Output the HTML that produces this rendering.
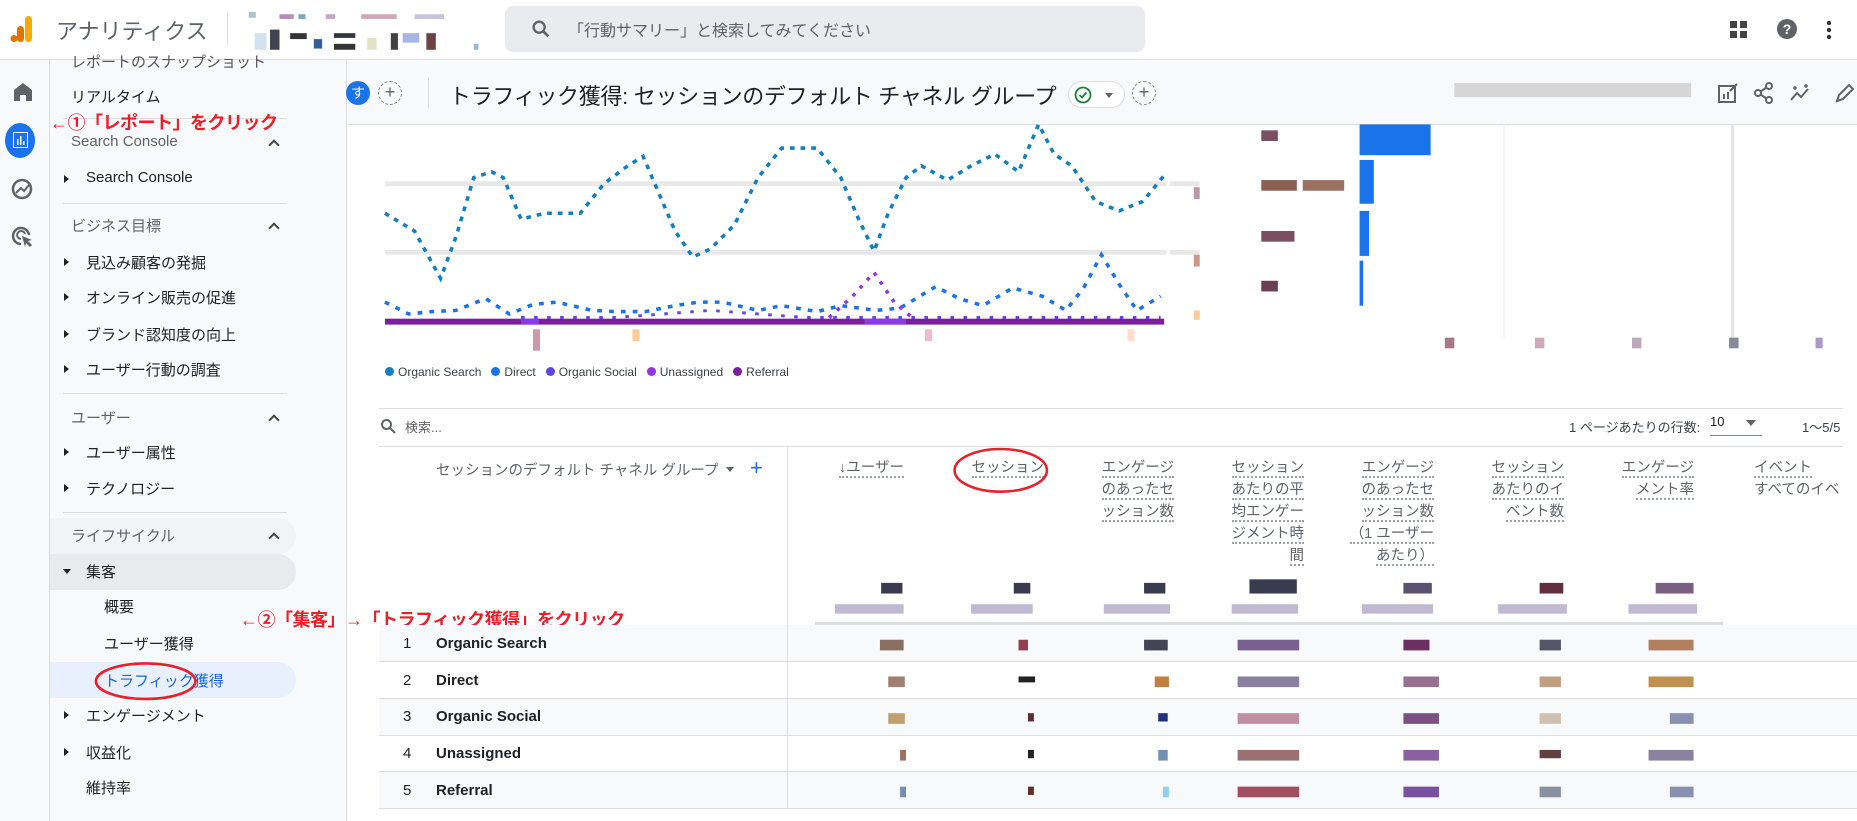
<!DOCTYPE html>
<html><head><meta charset="utf-8">
<style>
*{margin:0;padding:0;box-sizing:border-box}
body{width:1857px;height:821px;overflow:hidden;position:relative;background:#fff;font-family:"Liberation Sans","Noto Sans CJK JP",sans-serif;color:#202124}
.a{position:absolute;white-space:nowrap}
.nav{font-size:15px;color:#202124}
.hd{font-size:15px;color:#5f6368}
.tri{position:absolute;width:0;height:0;border-top:4px solid transparent;border-bottom:4px solid transparent;border-left:5px solid #202124}
.chev{position:absolute;width:8px;height:8px;border-left:2px solid #444;border-top:2px solid #444;transform:rotate(45deg)}
.red{color:#e8202a;font-weight:bold;font-size:18px;letter-spacing:-0.5px}
.col{font-size:14.5px;color:#5f6368;line-height:22px;text-align:right}
.col span{border-bottom:2px dotted #9aa0a6}
.row{position:absolute;left:379px;width:1478px;height:37px}
.rn{font-size:15px;color:#202124}
.rname{font-size:15px;font-weight:bold;color:#202124}
</style></head><body>

<div class="a" style="left:0;top:0;width:1857px;height:60px;background:#fff;border-bottom:1px solid #dadce0"></div>
<svg class="a" style="left:10px;top:14px" width="24" height="30" viewBox="0 0 24 30"><rect x="15" y="2" width="7" height="26" rx="3.5" fill="#f9ab00"/><rect x="7" y="12" width="7" height="16" rx="3.5" fill="#e37400"/><circle cx="4" cy="24.5" r="3.5" fill="#e37400"/></svg>
<div class="a" style="left:56px;top:14px;font-size:22px;color:#5f6368">アナリティクス</div>
<div class="a" style="left:227px;top:13px;width:1px;height:32px;background:#dadce0"></div>
<div class="a" style="left:505px;top:6px;width:640px;height:46px;background:#e9ebee;border-radius:8px"></div>
<svg class="a" style="left:530px;top:18px" width="22" height="22" viewBox="0 0 24 24"><circle cx="10" cy="10" r="6" fill="none" stroke="#5f6368" stroke-width="2.5"/><path d="M14.5 14.5L20 20" stroke="#5f6368" stroke-width="3"/></svg>
<div class="a" style="left:568px;top:17px;font-size:16px;color:#5f6368">「行動サマリー」と検索してみてください</div>
<svg class="a" style="left:1729px;top:20px" width="20" height="20"><rect x="1" y="1" width="7" height="7" fill="#444"/><rect x="11" y="1" width="7" height="7" fill="#444"/><rect x="1" y="11" width="7" height="7" fill="#444"/><rect x="11" y="11" width="7" height="7" fill="#444"/></svg>
<svg class="a" style="left:1776px;top:18px" width="22" height="22"><circle cx="11" cy="11" r="10" fill="#5f6368"/><text x="11" y="16" font-size="14" font-weight="bold" fill="#fff" text-anchor="middle" font-family="Liberation Sans">?</text></svg>
<svg class="a" style="left:1826px;top:20px" width="6" height="20"><circle cx="3" cy="3" r="2.2" fill="#333"/><circle cx="3" cy="10" r="2.2" fill="#333"/><circle cx="3" cy="17" r="2.2" fill="#333"/></svg>

<div class="a" style="left:0;top:60px;width:50px;height:761px;background:#f8f9fa;border-right:1px solid #dadce0"></div>
<svg class="a" style="left:12px;top:82px" width="22" height="20" viewBox="0 0 22 20"><path d="M11 1L2 8v11h6v-6h6v6h6V8z" fill="#5f6368"/></svg>
<div class="a" style="left:5px;top:123px;width:30px;height:35px;border-radius:50%;background:#1a73e8"></div>
<svg class="a" style="left:13px;top:132px" width="15" height="16"><rect x="0.5" y="0.5" width="14" height="15" fill="none" stroke="#fff"/><rect x="4" y="7" width="1.5" height="6" fill="#fff"/><rect x="7" y="4" width="1.5" height="9" fill="#fff"/><rect x="10" y="9" width="1.5" height="4" fill="#fff"/></svg>
<svg class="a" style="left:11px;top:178px" width="22" height="22"><circle cx="11" cy="11" r="9" fill="none" stroke="#5f6368" stroke-width="2.5"/><path d="M5 15l5-5 3 3 5-6" fill="none" stroke="#5f6368" stroke-width="2"/></svg>
<svg class="a" style="left:11px;top:225px" width="24" height="24"><path d="M18 10a8 8 0 1 0-8 9" fill="none" stroke="#5f6368" stroke-width="2.5"/><path d="M14 9a4 4 0 1 0-4 5" fill="none" stroke="#5f6368" stroke-width="2"/><path d="M11 11l10 4-4 1 4 4-2 2-4-4-1 4z" fill="#5f6368"/></svg>

<div class="a" style="left:50px;top:60px;width:297px;height:761px;background:#f8f9fa;border-right:1px solid #dadce0"></div>
<div class="a nav" style="left:71px;top:51px;color:#555">レポートのスナップショット</div>
<div class="a" style="left:0;top:0;width:347px;height:61px;background:#fff;border-bottom:1px solid #dadce0;z-index:0;display:none"></div>
<div class="a nav" style="left:71px;top:86px">リアルタイム</div>
<div class="a" style="left:63px;top:118px;width:224px;height:1px;background:#dadce0"></div>
<div class="a hd" style="left:71px;top:133px">Search Console</div><div class="chev" style="left:270px;top:141px"></div>
<div class="tri" style="left:64px;top:175px"></div><div class="a nav" style="left:86px;top:169px">Search Console</div>
<div class="a" style="left:63px;top:203px;width:224px;height:1px;background:#dadce0"></div>
<div class="a hd" style="left:71px;top:215px">ビジネス目標</div><div class="chev" style="left:270px;top:224px"></div>
<div class="tri" style="left:64px;top:258px"></div><div class="a nav" style="left:86px;top:252px">見込み顧客の発掘</div>
<div class="tri" style="left:64px;top:293px"></div><div class="a nav" style="left:86px;top:287px">オンライン販売の促進</div>
<div class="tri" style="left:64px;top:330px"></div><div class="a nav" style="left:86px;top:324px">ブランド認知度の向上</div>
<div class="tri" style="left:64px;top:365px"></div><div class="a nav" style="left:86px;top:359px">ユーザー行動の調査</div>
<div class="a" style="left:63px;top:393px;width:224px;height:1px;background:#dadce0"></div>
<div class="a hd" style="left:71px;top:407px">ユーザー</div><div class="chev" style="left:270px;top:416px"></div>
<div class="tri" style="left:64px;top:448px"></div><div class="a nav" style="left:86px;top:442px">ユーザー属性</div>
<div class="tri" style="left:64px;top:484px"></div><div class="a nav" style="left:86px;top:478px">テクノロジー</div>
<div class="a" style="left:63px;top:512px;width:224px;height:1px;background:#dadce0"></div>
<div class="a" style="left:50px;top:518px;width:246px;height:36px;background:#f1f3f4;border-radius:0 18px 18px 0"></div>
<div class="a hd" style="left:71px;top:525px">ライフサイクル</div><div class="chev" style="left:270px;top:534px"></div>
<div class="a" style="left:50px;top:554px;width:246px;height:36px;background:#e8eaed;border-radius:0 18px 18px 0"></div>
<div class="a" style="left:63px;top:569px;width:0;height:0;border-left:4px solid transparent;border-right:4px solid transparent;border-top:5px solid #202124"></div>
<div class="a nav" style="left:86px;top:561px">集客</div>
<div class="a nav" style="left:104px;top:596px">概要</div>
<div class="a nav" style="left:104px;top:633px">ユーザー獲得</div>
<div class="a" style="left:50px;top:662px;width:246px;height:36px;background:#e8f0fe;border-radius:0 18px 18px 0"></div>
<div class="a nav" style="left:104px;top:670px;color:#1967d2">トラフィック獲得</div>
<div class="tri" style="left:64px;top:711px"></div><div class="a nav" style="left:86px;top:705px">エンゲージメント</div>
<div class="tri" style="left:64px;top:748px"></div><div class="a nav" style="left:86px;top:742px">収益化</div>
<div class="a nav" style="left:86px;top:777px">維持率</div>

<div class="a" style="left:348px;top:61px;width:1509px;height:64px;background:#f8f9fa;border-bottom:1px solid #dadce0"></div>
<div class="a" style="left:346px;top:81px;width:24px;height:24px;border-radius:50%;background:#1a73e8;color:#fff;font-size:14px;text-align:center;line-height:24px">す</div>
<div class="a" style="left:378px;top:81px;width:24px;height:24px;border-radius:50%;border:1px dashed #80868b;color:#5f6368;font-size:18px;text-align:center;line-height:21px">+</div>
<div class="a" style="left:428px;top:78px;width:1px;height:30px;background:#dadce0"></div>
<div class="a" style="left:449px;top:79px;font-size:22px;color:#202124;letter-spacing:-0.3px">トラフィック獲得: セッションのデフォルト チャネル グループ</div>
<div class="a" style="left:1068px;top:81px;width:57px;height:27px;border:1px solid #dadce0;border-radius:14px;background:#fff"></div>
<svg class="a" style="left:1074px;top:86px" width="18" height="18"><circle cx="9" cy="9" r="7.5" fill="none" stroke="#188038" stroke-width="1.8"/><path d="M5.5 9l2.5 2.5 4.5-5" fill="none" stroke="#188038" stroke-width="1.8"/></svg>
<div class="a" style="left:1105px;top:93px;width:0;height:0;border-left:4px solid transparent;border-right:4px solid transparent;border-top:5px solid #5f6368"></div>
<div class="a" style="left:1132px;top:81px;width:24px;height:24px;border-radius:50%;border:1px dashed #80868b;color:#5f6368;font-size:18px;text-align:center;line-height:21px">+</div>
<svg class="a" style="left:1717px;top:82px" width="22" height="22"><rect x="2" y="4" width="16" height="16" fill="none" stroke="#5f6368" stroke-width="2"/><rect x="6" y="12" width="2" height="5" fill="#5f6368"/><rect x="10" y="10" width="2" height="7" fill="#5f6368"/><path d="M13 9l7-7" stroke="#5f6368" stroke-width="2"/></svg>
<svg class="a" style="left:1753px;top:82px" width="22" height="22"><circle cx="5" cy="11" r="3" fill="none" stroke="#5f6368" stroke-width="2"/><circle cx="16" cy="4" r="3" fill="none" stroke="#5f6368" stroke-width="2"/><circle cx="16" cy="18" r="3" fill="none" stroke="#5f6368" stroke-width="2"/><path d="M7.5 9.5l6-4M7.5 12.5l6 4" stroke="#5f6368" stroke-width="2"/></svg>
<svg class="a" style="left:1789px;top:82px" width="24" height="22"><path d="M2 18l6-7 4 4 7-8" fill="none" stroke="#5f6368" stroke-width="2"/><path d="M4 6h4M6 4v4M17 2v4M15 4h4" stroke="#5f6368" stroke-width="1.5"/></svg>
<svg class="a" style="left:1834px;top:82px" width="20" height="22"><path d="M3 19l2-6 10-10 4 4-10 10z" fill="none" stroke="#5f6368" stroke-width="2"/></svg>

<div class="a red" style="left:50px;top:109px">←①「レポート」をクリック</div>
<div class="a red" style="left:240px;top:606px">←②「集客」→「トラフィック獲得」をクリック</div>

<div class="a" style="left:385px;top:365px;font-size:12px;color:#3c4043">
<span style="display:inline-block;width:9px;height:9px;border-radius:50%;background:#127fbf;margin-right:4px"></span>Organic Search&nbsp;&nbsp;
<span style="display:inline-block;width:9px;height:9px;border-radius:50%;background:#1a73e8;margin-right:4px"></span>Direct&nbsp;&nbsp;
<span style="display:inline-block;width:9px;height:9px;border-radius:50%;background:#5e46e8;margin-right:4px"></span>Organic Social&nbsp;&nbsp;
<span style="display:inline-block;width:9px;height:9px;border-radius:50%;background:#9334e6;margin-right:4px"></span>Unassigned&nbsp;&nbsp;
<span style="display:inline-block;width:9px;height:9px;border-radius:50%;background:#7b1fa2;margin-right:4px"></span>Referral</div>

<div class="a" style="left:379px;top:408px;width:1464px;height:1px;background:#dadce0"></div>
<svg class="a" style="left:380px;top:418px" width="16" height="16"><circle cx="6.5" cy="6.5" r="4.5" fill="none" stroke="#5f6368" stroke-width="2"/><path d="M10 10l5 5" stroke="#5f6368" stroke-width="2"/></svg>
<div class="a" style="left:405px;top:417px;font-size:13px;color:#5f6368">検索...</div>
<div class="a" style="left:1569px;top:417px;font-size:13px;color:#3c4043">1 ページあたりの行数:</div>
<div class="a" style="left:1710px;top:414px;font-size:13px;color:#202124;width:52px;border-bottom:1px solid #80868b;height:22px">10</div>
<div class="a" style="left:1746px;top:420px;width:0;height:0;border-left:5px solid transparent;border-right:5px solid transparent;border-top:6px solid #5f6368"></div>
<div class="a" style="left:1802px;top:417px;font-size:13px;color:#3c4043">1〜5/5</div>
<div class="a" style="left:379px;top:446px;width:1464px;height:1px;background:#dadce0"></div>
<div class="a" style="left:787px;top:447px;width:1px;height:362px;background:#e0e0e0"></div>
<div class="a" style="left:436px;top:459px;font-size:14.5px;color:#5f6368">セッションのデフォルト チャネル グループ</div>
<div class="a" style="left:726px;top:467px;width:0;height:0;border-left:4px solid transparent;border-right:4px solid transparent;border-top:5px solid #5f6368"></div>
<div class="a" style="left:750px;top:455px;font-size:22px;color:#1a73e8">+</div>

<div class="a col" style="left:820px;top:457px;width:84px"><span>↓ユーザー</span></div>
<div class="a col" style="left:950px;top:457px;width:94px"><span>セッション</span></div>
<div class="a col" style="left:1080px;top:457px;width:94px"><span>エンゲージ</span><br><span>のあったセ</span><br><span>ッション数</span></div>
<div class="a col" style="left:1210px;top:457px;width:94px"><span>セッション</span><br><span>あたりの平</span><br><span>均エンゲー</span><br><span>ジメント時</span><br><span>間</span></div>
<div class="a col" style="left:1340px;top:457px;width:94px"><span>エンゲージ</span><br><span>のあったセ</span><br><span>ッション数</span><br><span>（1 ユーザー</span><br><span>あたり）</span></div>
<div class="a col" style="left:1470px;top:457px;width:94px"><span>セッション</span><br><span>あたりのイ</span><br><span>ベント数</span></div>
<div class="a col" style="left:1600px;top:457px;width:94px"><span>エンゲージ</span><br><span>メント率</span></div>
<div class="a col" style="left:1730px;top:457px;width:127px;text-align:left;padding-left:24px"><span>イベント</span><br>すべてのイベ</div>

<div class="a" style="left:815px;top:622px;width:908px;height:4px;background:#dadce0"></div>
<div class="row" style="top:625px;background:#f8f9fa;border-bottom:1px solid #dadce0"></div>
<div class="row" style="top:662px;border-bottom:1px solid #dadce0"></div>
<div class="row" style="top:699px;background:#f8f9fa;border-bottom:1px solid #dadce0"></div>
<div class="row" style="top:735px;border-bottom:1px solid #dadce0"></div>
<div class="row" style="top:772px;background:#f8f9fa;border-bottom:1px solid #dadce0"></div>
<div class="a" style="left:787px;top:625px;width:1px;height:184px;background:#e0e0e0"></div>
<div class="a rn" style="left:403px;top:635px">1</div><div class="a rname" style="left:436px;top:635px">Organic Search</div>
<div class="a rn" style="left:403px;top:672px">2</div><div class="a rname" style="left:436px;top:672px">Direct</div>
<div class="a rn" style="left:403px;top:708px">3</div><div class="a rname" style="left:436px;top:708px">Organic Social</div>
<div class="a rn" style="left:403px;top:745px">4</div><div class="a rname" style="left:436px;top:745px">Unassigned</div>
<div class="a rn" style="left:403px;top:782px">5</div><div class="a rname" style="left:436px;top:782px">Referral</div>

<svg class="a" style="left:0;top:0" width="1857" height="821" viewBox="0 0 1568 693" preserveAspectRatio="none">
<g opacity="0.85">
<rect x="210" y="10" width="6" height="5" fill="#9bc"/><rect x="236" y="12" width="12" height="4" fill="#a7a"/><rect x="252" y="12" width="6" height="4" fill="#69a"/><rect x="275" y="12" width="8" height="4" fill="#b9b"/><rect x="305" y="12" width="30" height="4" fill="#c9a"/><rect x="350" y="12" width="25" height="4" fill="#bbd"/>
<rect x="215" y="28" width="10" height="14" fill="#cde"/><rect x="228" y="25" width="8" height="17" fill="#223"/><rect x="245" y="28" width="14" height="5" fill="#111"/><rect x="265" y="33" width="7" height="8" fill="#148"/><rect x="282" y="28" width="18" height="4" fill="#112"/><rect x="282" y="37" width="18" height="5" fill="#111"/><rect x="310" y="32" width="8" height="10" fill="#ddb"/><rect x="330" y="28" width="6" height="14" fill="#222"/><rect x="340" y="28" width="14" height="8" fill="#9ad"/><rect x="360" y="28" width="8" height="14" fill="#522"/><rect x="400" y="37" width="4" height="5" fill="#8ad"/>
</g>
<rect x="1228" y="70" width="200" height="12" fill="#c8c8c8" opacity="0.7"/>
<rect x="325" y="153" width="660" height="4" fill="#e8e8e8"/><rect x="325" y="211" width="660" height="4" fill="#e8e8e8"/>
<rect x="988" y="153" width="25" height="4" fill="#e8e8e8"/><rect x="988" y="211" width="25" height="4" fill="#e8e8e8"/>
<polyline fill="none" stroke="#127fbf" stroke-width="3" stroke-dasharray="4 5" points="325,180 350,195 372,235 385,200 400,150 415,145 425,150 440,185 460,180 490,180 510,155 530,140 543,132 555,160 570,195 585,217 600,210 620,190 640,150 660,125 690,125 710,150 725,185 738,212 750,180 765,150 778,140 800,152 820,140 840,130 860,145 877,105 890,130 905,140 925,170 945,178 965,170 983,148"/>
<polyline fill="none" stroke="#1a73e8" stroke-width="3" stroke-dasharray="4 6" points="325,255 345,265 365,263 385,262 410,252 430,265 450,257 470,255 500,262 520,263 545,263 570,258 590,255 610,255 640,262 660,258 690,263 710,258 740,262 760,260 790,242 810,252 830,258 855,243 880,250 900,262 915,243 930,215 945,240 960,262 980,250"/>
<polyline fill="none" stroke="#9334e6" stroke-width="3" stroke-dasharray="3 6" points="700,268 720,250 738,230 755,255 770,268"/>
<polyline fill="none" stroke="#5e46e8" stroke-width="2.5" stroke-dasharray="3 8" points="440,268 520,268 600,262 680,268 760,268 860,268 980,268"/>
<rect x="325" y="269" width="658" height="5" fill="#7b1fa2"/>
<rect x="440" y="269" width="15" height="5" fill="#8a3be0"/><rect x="730" y="269" width="35" height="5" fill="#8a3be0"/>
<rect x="450" y="278" width="6" height="18" fill="#c9a"/><rect x="534" y="278" width="6" height="10" fill="#fc9"/><rect x="781" y="278" width="6" height="10" fill="#ebc"/><rect x="952" y="278" width="6" height="10" fill="#fdc"/>
<rect x="1008" y="158" width="5" height="10" fill="#b9a"/><rect x="1008" y="215" width="5" height="10" fill="#c98"/><rect x="1008" y="262" width="5" height="8" fill="#fc9"/>
<line x1="1463" y1="105" x2="1463" y2="285" stroke="#e6e6e6" stroke-width="3"/><line x1="1270" y1="105" x2="1270" y2="285" stroke="#f2f2f2" stroke-width="1"/>
<rect x="1148" y="105" width="60" height="26" fill="#1a73e8"/>
<rect x="1148" y="135" width="12" height="37" fill="#1a73e8"/>
<rect x="1148" y="178" width="8" height="38" fill="#1a73e8"/>
<rect x="1148" y="220" width="3" height="38" fill="#1a73e8"/>
<rect x="1065" y="110" width="14" height="9" fill="#7a5060"/><rect x="1065" y="152" width="30" height="9" fill="#8a6050"/><rect x="1100" y="152" width="35" height="9" fill="#9a7060"/><rect x="1065" y="195" width="28" height="9" fill="#7a5060"/><rect x="1065" y="237" width="14" height="9" fill="#6a4050"/>
<rect x="1220" y="285" width="8" height="9" fill="#a78"/><rect x="1296" y="285" width="8" height="9" fill="#cab"/><rect x="1378" y="285" width="8" height="9" fill="#bab"/><rect x="1460" y="285" width="8" height="9" fill="#889"/><rect x="1533" y="285" width="6" height="9" fill="#a9c"/>
<g fill="#3a3a50">
<rect x="744" y="492" width="18" height="9"/><rect x="856" y="492" width="14" height="9"/><rect x="966" y="492" width="18" height="9"/><rect x="1055" y="489" width="40" height="12"/><rect x="1185" y="492" width="24" height="9" fill="#5a5070"/><rect x="1300" y="492" width="20" height="9" fill="#603040"/><rect x="1398" y="492" width="32" height="9" fill="#7a6080"/>
</g>
<g fill="#b0a8c8" opacity="0.8">
<rect x="705" y="510" width="58" height="8"/><rect x="820" y="510" width="52" height="8"/><rect x="932" y="510" width="56" height="8"/><rect x="1040" y="510" width="56" height="8"/><rect x="1150" y="510" width="60" height="8"/><rect x="1265" y="510" width="58" height="8"/><rect x="1375" y="510" width="58" height="8"/>
</g>
<g>
<rect x="743" y="540" width="20" height="9" fill="#8a7060"/><rect x="860" y="540" width="8" height="9" fill="#904050"/><rect x="966" y="540" width="20" height="9" fill="#445"/><rect x="1045" y="540" width="52" height="9" fill="#7a6090"/><rect x="1185" y="540" width="22" height="9" fill="#6a3060"/><rect x="1300" y="540" width="18" height="9" fill="#556"/><rect x="1392" y="540" width="38" height="9" fill="#b08060"/>
<rect x="750" y="571" width="14" height="9" fill="#a08070"/><rect x="860" y="571" width="14" height="5" fill="#222"/><rect x="975" y="571" width="12" height="9" fill="#c08040"/><rect x="1045" y="571" width="52" height="9" fill="#8a80a0"/><rect x="1185" y="571" width="30" height="9" fill="#9a7090"/><rect x="1300" y="571" width="18" height="9" fill="#c0a080"/><rect x="1392" y="571" width="38" height="9" fill="#c09050"/>
<rect x="750" y="602" width="14" height="9" fill="#c0a070"/><rect x="868" y="602" width="5" height="7" fill="#603030"/><rect x="978" y="602" width="8" height="7" fill="#203080"/><rect x="1045" y="602" width="52" height="9" fill="#c090a0"/><rect x="1185" y="602" width="30" height="9" fill="#7a5080"/><rect x="1300" y="602" width="18" height="9" fill="#d0c0b0"/><rect x="1410" y="602" width="20" height="9" fill="#8a90b0"/>
<rect x="760" y="633" width="5" height="9" fill="#a07060"/><rect x="868" y="633" width="5" height="7" fill="#222"/><rect x="978" y="633" width="8" height="9" fill="#7090b0"/><rect x="1045" y="633" width="52" height="9" fill="#9a7070"/><rect x="1185" y="633" width="30" height="9" fill="#8a60a0"/><rect x="1300" y="633" width="18" height="7" fill="#604040"/><rect x="1392" y="633" width="38" height="9" fill="#8a80a0"/>
<rect x="760" y="664" width="5" height="9" fill="#7090b0"/><rect x="868" y="664" width="5" height="7" fill="#603030"/><rect x="982" y="664" width="5" height="9" fill="#90d0f0"/><rect x="1045" y="664" width="52" height="9" fill="#a05060"/><rect x="1185" y="664" width="30" height="9" fill="#7a50a0"/><rect x="1300" y="664" width="18" height="9" fill="#8a90a0"/><rect x="1410" y="664" width="20" height="9" fill="#8a90b0"/>
</g>
<ellipse cx="123" cy="575" rx="42" ry="15" fill="none" stroke="#e8202a" stroke-width="2.2"/>
<ellipse cx="845" cy="397" rx="39" ry="18" fill="none" stroke="#e8202a" stroke-width="2.2"/>
</svg>
</body></html>
